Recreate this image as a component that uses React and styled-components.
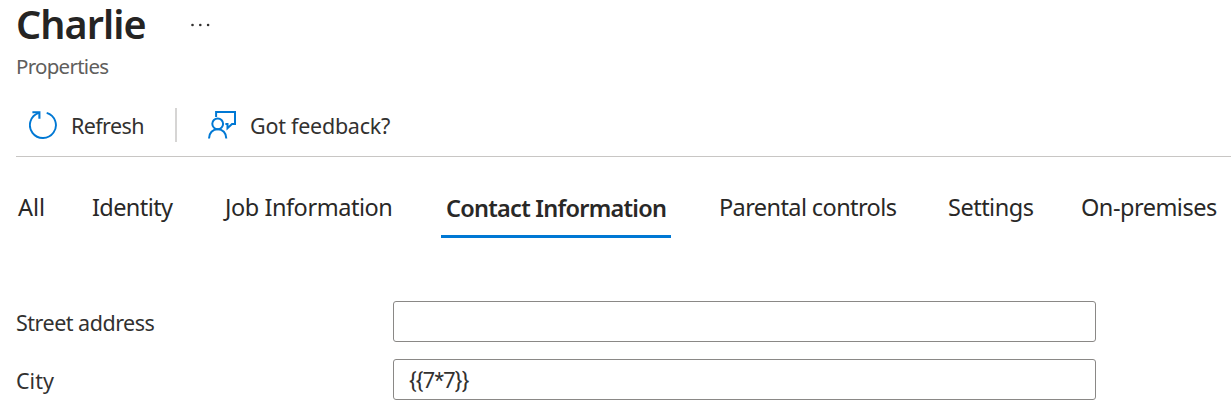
import React from "react";
import styled, { createGlobalStyle } from "styled-components";

const GlobalStyle = createGlobalStyle`
  *, *::before, *::after { box-sizing: border-box; }
  body {
    margin: 0;
    background: #fff;
    color: #323130;
    font-family: "Segoe UI", "Noto Sans", "Open Sans", sans-serif;
  }
`;

const Page = styled.main`
  height: 406px;
  padding-left: 16px;
`;

const TitleRow = styled.header`
  display: flex;
  height: 52px;
`;

const Title = styled.h1`
  width: 174px;
  margin: 0;
  font-size: 39.5px;
  font-weight: 600;
  line-height: 49px;
  letter-spacing: -0.9px;
  color: #252423;
`;

const MoreButton = styled.button`
  display: flex;
  align-items: center;
  height: 50px;
  padding: 0;
  border: 0;
  background: none;
`;

const Subtitle = styled.p`
  margin: 0;
  font-size: 20.5px;
  line-height: 29px;
  height: 28px;
  letter-spacing: -0.72px;
  color: #605e5c;
`;

const Toolbar = styled.div`
  display: flex;
  align-items: center;
  height: 77px;
  padding-top: 13px;
  border-bottom: 1px solid #c8c6c4;
`;

const Command = styled.button`
  display: flex;
  align-items: center;
  gap: 14px;
  width: ${(p) => p.$width}px;
  height: 34px;
  margin-left: ${(p) => p.$left}px;
  padding: 0;
  border: 0;
  background: none;
  font-family: inherit;
  font-size: 21.5px;
  line-height: 34px;
  letter-spacing: ${(p) => p.$tracking}px;
  color: #323130;
  white-space: nowrap;
`;

const CommandLabel = styled.span`
  padding-top: 2px;
`;

const Divider = styled.span`
  width: 2px;
  height: 34px;
  margin-left: 31px;
  background: #d6d5d4;
`;

const TabList = styled.nav`
  display: grid;
  grid-template-columns: 74px 132px 219px 278px 228px 134px 150px;
  height: 81px;
  padding-top: 31px;
`;

const Tab = styled.a`
  justify-self: start;
  height: 50px;
  padding-left: ${(p) => p.$inset}px;
  padding-top: 1px;
  width: ${(p) => (p.$active ? "230px" : "auto")};
  border-bottom: 3px solid ${(p) => (p.$active ? "#0078d4" : "transparent")};
  font-size: 23.5px;
  font-weight: ${(p) => (p.$active ? 600 : 400)};
  line-height: ${(p) => (p.$active ? 38 : 37)}px;
  letter-spacing: ${(p) => p.$tracking}px;
  color: #292827;
  white-space: nowrap;
`;

const Form = styled.form`
  display: grid;
  gap: 17px;
  margin-top: 63px;
`;

const Field = styled.label`
  display: grid;
  grid-template-columns: 377px 703px;
  height: 41px;
`;

const FieldLabel = styled.span`
  font-size: 21.5px;
  line-height: 44px;
  height: 41px;
  letter-spacing: ${(p) => p.$tracking}px;
`;

const TextInput = styled.input`
  width: 100%;
  height: 41px;
  padding: 2px 15px 0;
  border: 1px solid #8a8886;
  border-radius: 3px;
  outline: 0;
  background: #fff;
  font-family: "Segoe UI", Roboto, sans-serif;
  font-size: 22px;
  letter-spacing: -0.6px;
  color: #323130;
`;

const tabs = [
  { label: "All", inset: 2, tracking: 0 },
  { label: "Identity", inset: 2, tracking: -0.6 },
  { label: "Job Information", inset: 3, tracking: -0.45 },
  { label: "Contact Information", inset: 5, tracking: -0.74, active: true },
  { label: "Parental controls", inset: 0, tracking: -0.6 },
  { label: "Settings", inset: 1, tracking: -0.5 },
  { label: "On-premises", inset: 0, tracking: -0.5 },
];

function RefreshIcon() {
  return (
    <svg width="28" height="28" viewBox="0 0 28 28" fill="none" stroke="#0078d4" strokeWidth="1.9">
      <path d="M17.7 1.8A13 12.9 0 1 1 9.8 1.9" />
      <path d="M3.4 1.3H10.4V7.7" strokeWidth="2.1" />
    </svg>
  );
}

function FeedbackIcon() {
  return (
    <svg width="28" height="28" viewBox="0 0 28 28" fill="none" stroke="#0078d4" strokeWidth="2">
      <path d="M8.1 6V1H27V13.1H24L19.5 17.2V13.1H17.4" />
      <circle cx="9.7" cy="12.8" r="5.4" />
      <path d="M1 27.5C1 21.8 4.8 18.2 9.7 18.2S18.3 21.8 18.3 27.5" />
    </svg>
  );
}

function MoreIcon() {
  return (
    <svg width="21" height="4" viewBox="0 0 21 4" fill="#323130">
      <circle cx="2.5" cy="2" r="1.3" />
      <circle cx="10.3" cy="2" r="1.3" />
      <circle cx="18.1" cy="2" r="1.3" />
    </svg>
  );
}

export default function App() {
  return (
    <>
      <GlobalStyle />
      <Page>
        <TitleRow>
          <Title>Charlie</Title>
          <MoreButton type="button" aria-label="More">
            <MoreIcon />
          </MoreButton>
        </TitleRow>
        <Subtitle>Properties</Subtitle>
        <Toolbar>
          <Command type="button" $left={13} $width={115} $tracking={-0.6}>
            <RefreshIcon />
            <CommandLabel>Refresh</CommandLabel>
          </Command>
          <Divider />
          <Command type="button" $left={31} $width={184} $tracking={-0.25}>
            <FeedbackIcon />
            <CommandLabel>Got feedback?</CommandLabel>
          </Command>
        </Toolbar>
        <TabList>
          {tabs.map((tab) => (
            <Tab key={tab.label} $inset={tab.inset} $tracking={tab.tracking} $active={tab.active}>
              {tab.label}
            </Tab>
          ))}
        </TabList>
        <Form>
          <Field>
            <FieldLabel $tracking={-0.5}>Street address</FieldLabel>
            <TextInput defaultValue="" />
          </Field>
          <Field>
            <FieldLabel $tracking={0}>City</FieldLabel>
            <TextInput defaultValue="{{7*7}}" />
          </Field>
        </Form>
      </Page>
    </>
  );
}
